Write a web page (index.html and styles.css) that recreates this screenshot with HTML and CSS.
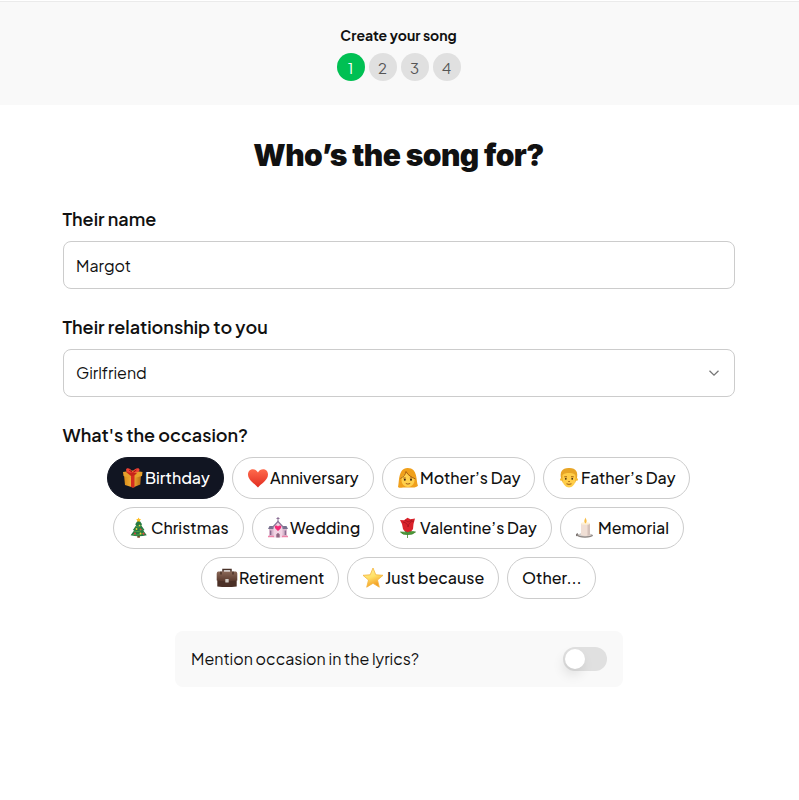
FILE: index.html
```html
<!DOCTYPE html>
<html lang="en">
<head>
    <meta charset="UTF-8">
    <meta name="viewport" content="width=device-width, initial-scale=1.0">
    <title>Create your song</title>
    <link rel="stylesheet" href="styles.css">
</head>
<body>
    <!-- progress header -->
    <header class="progress">
        <div class="progress-title">Create your song</div>
        <div class="steps">
            <span class="step active">1</span>
            <span class="step">2</span>
            <span class="step">3</span>
            <span class="step">4</span>
        </div>
    </header>

    <main class="form">
        <h1>Who’s the song for?</h1>

        <label class="label" for="name">Their name</label>
        <input class="field" type="text" id="name" value="Margot">

        <div class="label">Their relationship to you</div>
        <div class="field select">
            <span>Girlfriend</span>
            <svg class="chevron" width="12" height="12" viewBox="0 0 12 12"><path d="M1.5 3.8 6 8.2l4.5-4.4" fill="none" stroke="#777" stroke-width="1.3"/></svg>
        </div>

        <div class="label">What's the occasion?</div>
        <div class="occasions">
            <button class="pill birthday selected">
                <svg class="icon" viewBox="0 0 22 22">
                    <defs><linearGradient id="gold" x2="1"><stop stop-color="#d98b18"/><stop offset=".5" stop-color="#f2b13b"/><stop offset="1" stop-color="#b96b10"/></linearGradient></defs>
                    <path d="M2 8l8 2.500 9-2.500-.7 9.500L11 20.500 3 18z" fill="url(#gold)"/>
                    <path d="M1 5l10-1.500L20.500 5 20 9l-9.500 2.500L1.500 9z" fill="#e6a02c"/>
                    <path d="M9 8h3.500v12.400l-2 .1-1.500-.5z" fill="#d52b1e"/>
                    <path d="M4 5l4-1 7 2.500-3 2-3 .5z" fill="#c62418"/>
                    <path d="M10.500 5C8 .5 4 .5 4 3s4 3 6.500 2.500C13 6 18 5.500 17.500 2.500 17 .5 12.500 1 10.500 5z" fill="#ed4134"/>
                    <path d="M10 5l-3-2M11.500 5l3-2" stroke="#9d160d" stroke-width="1"/>
                </svg>
                <span>Birthday</span>
            </button>
            <button class="pill anniversary">
                <svg class="icon" viewBox="0 0 22 22">
                    <defs><linearGradient id="heart" x2="0" y2="1"><stop stop-color="#ff6a4c"/><stop offset="1" stop-color="#e12c20"/></linearGradient></defs>
                    <path d="M11 20.500C8.500 17 1 13.500 1 7.500 1 1.500 8.500.5 11 5.500c2.500-5 10-4 10 2 0 6-7.500 9.500-10 13z" fill="url(#heart)"/>
                </svg>
                <span>Anniversary</span>
            </button>
            <button class="pill mother">
                <svg class="icon" viewBox="0 0 22 22">
                    <path d="M1 20C2.500 16 .5 1.500 10.500 1 21 .8 19 14 21 18.500c-1 1.500-3 2-5 2H6C4 21 2 21 1 20z" fill="#f0a01c"/>
                    <path d="M4.500 10C7 8.500 8.500 7 9 5c2 3.500 5 5 8.500 6.500v1.500c0 4-3 7-6.500 7s-6.500-3-6.500-7z" fill="#ffd04d"/>
                    <path d="M3.500 11.500C7 9.500 8.500 7.500 9 4.500c2 4 5.500 5.500 9.500 7.500" fill="none" stroke="#a9600f" stroke-width="1"/>
                    <path d="M6.300 11h2.500M12.800 11h2.500M8.800 16.500q2 1.200 4.400 0" fill="none" stroke="#945013" stroke-width=".9"/>
                    <circle cx="7.800" cy="12.800" r="1" fill="#3a2510"/><circle cx="14" cy="12.800" r="1" fill="#3a2510"/>
                </svg>
                <span>Mother’s Day</span>
            </button>
            <button class="pill father">
                <svg class="icon" viewBox="0 0 22 22">
                    <path d="M3.200 12C1.500 5 4 .8 11 1c7-.2 9.500 4 7.800 11l-1.800 4H5z" fill="#e8a526"/>
                    <path d="M4.500 8.500C5 6.500 9 6 11 6s6.500.5 6.500 3v4c0 4-3.500 7.500-6.500 7.500S4.500 17 4.500 13z" fill="#ffcd48"/>
                    <circle cx="3.300" cy="12.500" r="1.300" fill="#f6b72d"/><circle cx="18.700" cy="12.500" r="1.300" fill="#f6b72d"/>
                    <path d="M6.300 9.800h2.700M13 9.800h2.700M8.500 16.800q2.500 1.200 5 0M10.300 14.500h1.500" fill="none" stroke="#9d5b13" stroke-width="1"/>
                    <circle cx="7.800" cy="11.800" r=".9" fill="#3a2510"/><circle cx="14.200" cy="11.800" r=".9" fill="#3a2510"/>
                </svg>
                <span>Father’s Day</span>
            </button>
            <button class="pill christmas">
                <svg class="icon" viewBox="0 0 22 22">
                    <path d="M9.300 17h2.600v3.700H9.300z" fill="#7a4420"/>
                    <path d="M10.600 2l3.600 5.500-1.200.5 3.500 5-1.200.5 3.500 4.800q-8 2-16.200 0l3.500-4.800-1.200-.5 3.400-5-1.200-.5z" fill="#277a42"/>
                    <path d="M8 9.500q3 1.500 5.500-1M6 14q6 1.800 8.500-2M5 17.500q7 1.500 11-2" fill="none" stroke="#5aa845" stroke-width=".8"/>
                    <path d="M10.600.5l.8 1.500 1.700.2-1.300 1.200.3 1.700-1.500-.8-1.500.8.3-1.700-1.300-1.200 1.700-.2z" fill="#ffbe22"/>
                    <g fill="#f5d637"><circle cx="8.500" cy="12" r=".9"/><circle cx="12.500" cy="16.500" r=".9"/><circle cx="11.500" cy="8.500" r=".8"/></g>
                    <g fill="#e74045"><circle cx="15.500" cy="16.700" r="1"/><circle cx="12.500" cy="12.300" r=".9"/><circle cx="7" cy="16.500" r=".9"/></g>
                </svg>
                <span>Christmas</span>
            </button>
            <button class="pill wedding">
                <svg class="icon" viewBox="0 0 22 22">
                    <path d="M2 12h18v8H2z" fill="#d9b6cd"/>
                    <path d="M1 12l1.500-3h17l1.500 3z" fill="#77718f"/>
                    <path d="M6.500 9.500L11 4.500l4.500 5v11h-9z" fill="#f2d3e3"/>
                    <path d="M5.500 10.500L11 4.500l5.500 6" fill="none" stroke="#8d7898" stroke-width="1.300"/>
                    <path d="M11 0v5M9.500 1.500h3" stroke="#8c7196" stroke-width="1"/>
                    <path d="M11 14C9 12 7.500 11.200 7.800 9.500c.4-1.500 2.500-1.300 3.200 0 .7-1.300 2.800-1.500 3.200 0 .3 1.700-1.200 2.500-3.200 4.500z" fill="#f42b78"/>
                    <path d="M9.300 20.500v-3q1.700-3 3.400 0v3z" fill="#8f6680"/>
                    <path d="M3.700 13.500v4.500M18.300 13.500v4.500" stroke="#85668b" stroke-width="1.300"/>
                    <path d="M1 19.500h6M15 19.500h6" stroke="#ef83a8" stroke-width="1.500"/>
                </svg>
                <span>Wedding</span>
            </button>
            <button class="pill valentine">
                <svg class="icon" viewBox="0 0 22 22">
                    <path d="M10.500 14v7M10.500 17.500q-5 .5-7-2.500 5-.5 7 2 2-3.500 8-2-3 3-8 2.500" fill="#4f9b38" stroke="#3d842d" stroke-width=".8"/>
                    <path d="M3 3l4 .2L10.500.7l3 1.500L18 1.500l-1.500 5.500-.5 5q-2 3.500-5 3.500T6 12L5 7z" fill="#d9222b"/>
                    <path d="M6 5q5 1 5 5 1-6 6-6M8 3l3 2 4-2" fill="none" stroke="#a3141f" stroke-width=".8"/>
                    <path d="M8 14.500l2.700 1.700 2.800-1.700" fill="none" stroke="#41903b" stroke-width="1.300"/>
                </svg>
                <span>Valentine’s Day</span>
            </button>
            <button class="pill memorial">
                <svg class="icon" viewBox="0 0 22 22">
                    <ellipse cx="10" cy="18.500" rx="8" ry="2.200" fill="#8c8581"/>
                    <ellipse cx="10" cy="17.800" rx="7" ry="1.600" fill="#d2cdca"/>
                    <path d="M6 6.500q4.500-1.500 9 0V18q-4.500 2-9 0z" fill="#f0dfd5"/>
                    <path d="M12.500 6l2.500.5V18l-2.500.8z" fill="#d5c2ba"/>
                    <ellipse cx="10.500" cy="6.500" rx="4.500" ry="1.200" fill="#fff1d5"/>
                    <path d="M10.500 6.500C8.500 4.500 9.500 3 10.500.5c1 2.500 2 4 0 6z" fill="#f8bc45"/>
                    <path d="M3 17q-2 0-1 2" fill="none" stroke="#77706d" stroke-width="1.500"/>
                </svg>
                <span>Memorial</span>
            </button>
            <button class="pill retirement">
                <svg class="icon" viewBox="0 0 22 22">
                    <defs><linearGradient id="leather" x2="0" y2="1"><stop stop-color="#8a6857"/><stop offset="1" stop-color="#59392d"/></linearGradient></defs>
                    <path d="M7 5V2.500h8V5" fill="none" stroke="#493128" stroke-width="1.500"/>
                    <path d="M1.300 12h19.400v7.500q-9.700 1-19.400 0z" fill="#4b3026"/>
                    <path d="M2.200 4.500h17.600q1.200 0 1.500 2v7q-10.300 1.500-20.600 0v-7q.3-2 1.500-2z" fill="url(#leather)"/>
                    <path d="M5 4.500v3M17 4.500v3" stroke="#3e281f" stroke-width="1.200"/>
                    <rect x="9.300" y="12" width="3.400" height="3.500" rx=".5" fill="#d2ccc5"/>
                </svg>
                <span>Retirement</span>
            </button>
            <button class="pill because">
                <svg class="icon" viewBox="0 0 22 22">
                    <defs><linearGradient id="star" x2=".4" y2="1"><stop stop-color="#fff3a0"/><stop offset=".55" stop-color="#ffe067"/><stop offset="1" stop-color="#f39c22"/></linearGradient></defs>
                    <path d="M11 1l2.800 6.800 7.200.5-5.500 4.700 1.800 7.200L11 16.300l-6.300 3.900L6.500 13 1 8.300l7.200-.5z" fill="url(#star)" stroke="#f4b43c" stroke-width=".8" stroke-linejoin="round"/>
                </svg>
                <span>Just because</span>
            </button>
            <button class="pill other"><span>Other...</span></button>
        </div>

        <!-- lyrics toggle -->
        <div class="mention">
            <span>Mention occasion in the lyrics?</span>
            <div class="toggle"><div class="knob"></div></div>
        </div>
    </main>
</body>
</html>
```
FILE: styles.css
```css
* {
    box-sizing: border-box;
}

body {
    margin: 0;
    background: #fff;
    color: #111;
    font-family: "Plus Jakarta Sans", Inter, sans-serif;
    font-size: 16px;
}

.progress {
    height: 105px;
    padding: 25px 2px 0 0;
    background: linear-gradient(#fff 1px, #ebebeb 1px, #ebebeb 2px, #f9f9f9 2px);
    text-align: center;
}

.progress-title {
    font-size: 14px;
    line-height: 20px;
    font-weight: 700;
}

.steps {
    display: flex;
    justify-content: center;
    gap: 4px;
    margin-top: 8px;
}

.step {
    width: 28px;
    height: 28px;
    border-radius: 50%;
    background: #e0e0e0;
    color: #555;
    font-size: 15px;
    line-height: 29px;
}

.step.active {
    background: #00c053;
    color: #fff;
}

.form {
    width: 672px;
    margin: 0 0 0 63px;
    padding-top: 32px;
}

h1 {
    margin: 0 0 32px;
    padding-right: 1px;
    font-family: Inter, sans-serif;
    font-size: 30px;
    line-height: 36px;
    font-weight: 900;
    letter-spacing: -0.58px;
    text-align: center;
}

.label {
    display: block;
    margin: 0 0 9px -0.5px;
    font-size: 18px;
    line-height: 27px;
    font-weight: 600;
}

.field {
    display: block;
    width: 100%;
    height: 48px;
    margin: 0 0 24px;
    padding: 0 12px;
    border: 1px solid #ccc;
    border-radius: 8px;
    background: #fff;
    color: #111;
    font: inherit;
}

.select {
    display: flex;
    align-items: center;
    justify-content: space-between;
    padding-right: 14px;
}

.occasions {
    display: flex;
    flex-wrap: wrap;
    justify-content: center;
    gap: 8px;
    padding: 0 41px 0 40px;
}

.pill {
    display: flex;
    align-items: center;
    height: 42px;
    padding: 0 0 0 14px;
    border: 1px solid #ccc;
    border-radius: 21px;
    background: #fff;
    color: #111;
    font: inherit;
    font-weight: 500;
    white-space: nowrap;
}

.pill span,
.select span,
.mention span {
    padding-bottom: 2px;
}

.pill.selected {
    border-color: #111522;
    background: #111522;
    color: #fff;
}

.icon {
    flex: none;
    width: 22px;
    height: 22px;
    margin-right: 1px;
}

.birthday { width: 117px; }
.anniversary { width: 142px; }
.mother { width: 153px; }
.father { width: 147px; }
.christmas { width: 131px; }
.wedding { width: 122px; }
.valentine { width: 170px; }
.memorial { width: 124px; }
.retirement { width: 138px; }
.because { width: 152px; }
.other { width: 89px; }

.mention {
    display: flex;
    align-items: center;
    justify-content: space-between;
    width: 448px;
    height: 56px;
    margin: 32px auto 0;
    padding: 0 16px;
    border-radius: 8px;
    background: #f9f9f9;
}

.toggle {
    width: 44px;
    height: 24px;
    padding: 2px;
    border-radius: 12px;
    background: #e0e0e0;
}

.knob {
    width: 20px;
    height: 20px;
    border-radius: 50%;
    background: #fff;
    box-shadow: -2px 6px 12px rgba(0, 0, 0, 0.1);
}
```
